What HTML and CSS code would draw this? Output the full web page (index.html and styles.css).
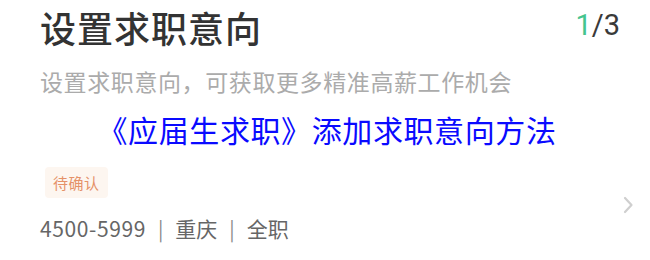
FILE: index.html
```html
<!DOCTYPE html>
<html lang="zh-CN">
<head>
<meta charset="utf-8">
<link rel="stylesheet" href="styles.css">
</head>
<body>
<div class="card">
  <div class="head">
    <h1 class="title">设置求职意向</h1>
    <div class="pager"><span class="cur">1</span>/3</div>
  </div>
  <p class="sub">设置求职意向，可获取更多精准高薪工作机会</p>
  <p class="caption">《应届生求职》添加求职意向方法</p>
  <div class="row">
    <div class="info">
      <span class="badge">待确认</span>
      <div class="meta"><span class="num">4500-5999</span><span class="sep">|</span>重庆<span class="sep">|</span>全职</div>
    </div>
    <svg class="chev" width="12" height="18" viewBox="0 0 12 18"><path d="M3 2 L9.5 9 L3 16" fill="none" stroke="#cfcfcf" stroke-width="2.2" stroke-linecap="round" stroke-linejoin="round"/></svg>
  </div>
</div>
</body>
</html>
```
FILE: styles.css
```css
html, body {
  margin: 0;
  padding: 0;
  background: #ffffff;
}
body {
  width: 650px;
  height: 260px;
  overflow: hidden;
  font-family: "Noto Sans CJK SC", "Noto Sans", sans-serif;
}
.card {
  display: flex;
  flex-direction: column;
  padding: 9px 16px 0 40px;
}
.head {
  display: flex;
  justify-content: space-between;
  align-items: flex-start;
  padding-right: 14px;
}
.title {
  margin: 0;
  font-size: 36px;
  line-height: 36px;
  font-weight: 500;
  color: #333333;
  letter-spacing: 1px;
}
.pager {
  font-family: Roboto, "Noto Sans", sans-serif;
  font-size: 29px;
  line-height: 29px;
  color: #3a3a3a;
  margin-top: 2px;
}
.cur {
  color: #45c48e;
}
.sub {
  margin: 25px 0 0 0;
  font-size: 23px;
  line-height: 23px;
  letter-spacing: 0.6px;
  color: #ababab;
}
.caption {
  margin: 21px 0 0 0;
  align-self: center;
  font-size: 30px;
  line-height: 30px;
  color: #0a0aff;
  letter-spacing: 0.6px;
  padding-right: 20px;
}
.row {
  display: flex;
  align-items: center;
  justify-content: space-between;
  margin-top: 23px;
}
.info {
  display: flex;
  flex-direction: column;
  align-items: flex-start;
}
.badge {
  margin-left: 5px;
  padding: 8px 8px;
  font-size: 15px;
  line-height: 15px;
  color: #e59168;
  background: #fdf6f0;
  border-radius: 4px;
  letter-spacing: 0.5px;
}
.meta {
  display: flex;
  align-items: center;
  margin-top: 20px;
  font-size: 21px;
  line-height: 21px;
  color: #666666;
}
.num {
  letter-spacing: 0.6px;
}
.sep {
  color: #8a8a8a;
  padding: 0 12px 0 12px;
  font-size: 20px;
}
.chev {
  margin-top: 4px;
}
```
